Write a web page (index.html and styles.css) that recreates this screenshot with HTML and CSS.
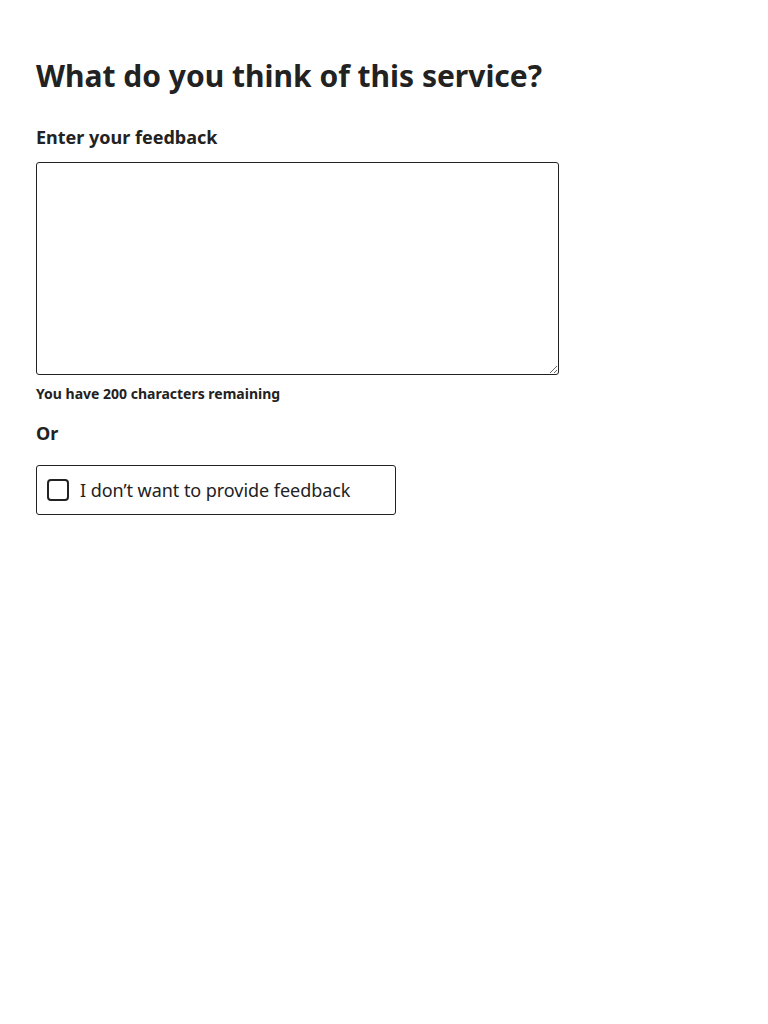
FILE: index.html
```html
<!DOCTYPE html>
<html lang="en">
<head>
<meta charset="utf-8">
<title>Feedback</title>
<link rel="stylesheet" href="styles.css">
</head>
<body>
<main class="page">
  <h1 class="title">What do you think of this service?</h1>
  <label class="label" for="fb">Enter your feedback</label>
  <textarea id="fb" class="textarea"></textarea>
  <p class="hint">You have 200 characters remaining</p>
  <p class="or">Or</p>
  <label class="check">
    <span class="box"></span>
    <span class="check-text">I don’t want to provide feedback</span>
  </label>
</main>
</body>
</html>
```
FILE: styles.css
```css
html, body { margin: 0; padding: 0; background: #fff; }
body { font-family: "Noto Sans", "Open Sans", sans-serif; color: #222; }
.page { padding: 56px 36px; display: flex; flex-direction: column; align-items: flex-start; }
.title { font-size: 30px; font-weight: 700; line-height: 40px; margin: 0 0 29px; }
.label { font-size: 18px; font-weight: 700; line-height: 24px; margin-bottom: 13px; }
.textarea { width: 523px; height: 213px; box-sizing: border-box; border: 1px solid #222; border-radius: 3px; margin: 0; padding: 8px; font: inherit; resize: vertical; display: block; }
.hint { font-size: 14px; font-weight: 700; line-height: 20px; margin: 9px 0 0; }
.or { font-size: 18px; font-weight: 700; line-height: 24px; margin: 17px 0 0; }
.check { margin-top: 20px; width: 360px; height: 50px; box-sizing: border-box; border: 1px solid #222; border-radius: 3px; display: flex; align-items: center; padding-left: 10px; gap: 11px; }
.box { width: 22px; height: 22px; box-sizing: border-box; border: 2px solid #222; border-radius: 4px; }
.check-text { font-size: 18px; line-height: 24px; letter-spacing: -0.05px; }
```
